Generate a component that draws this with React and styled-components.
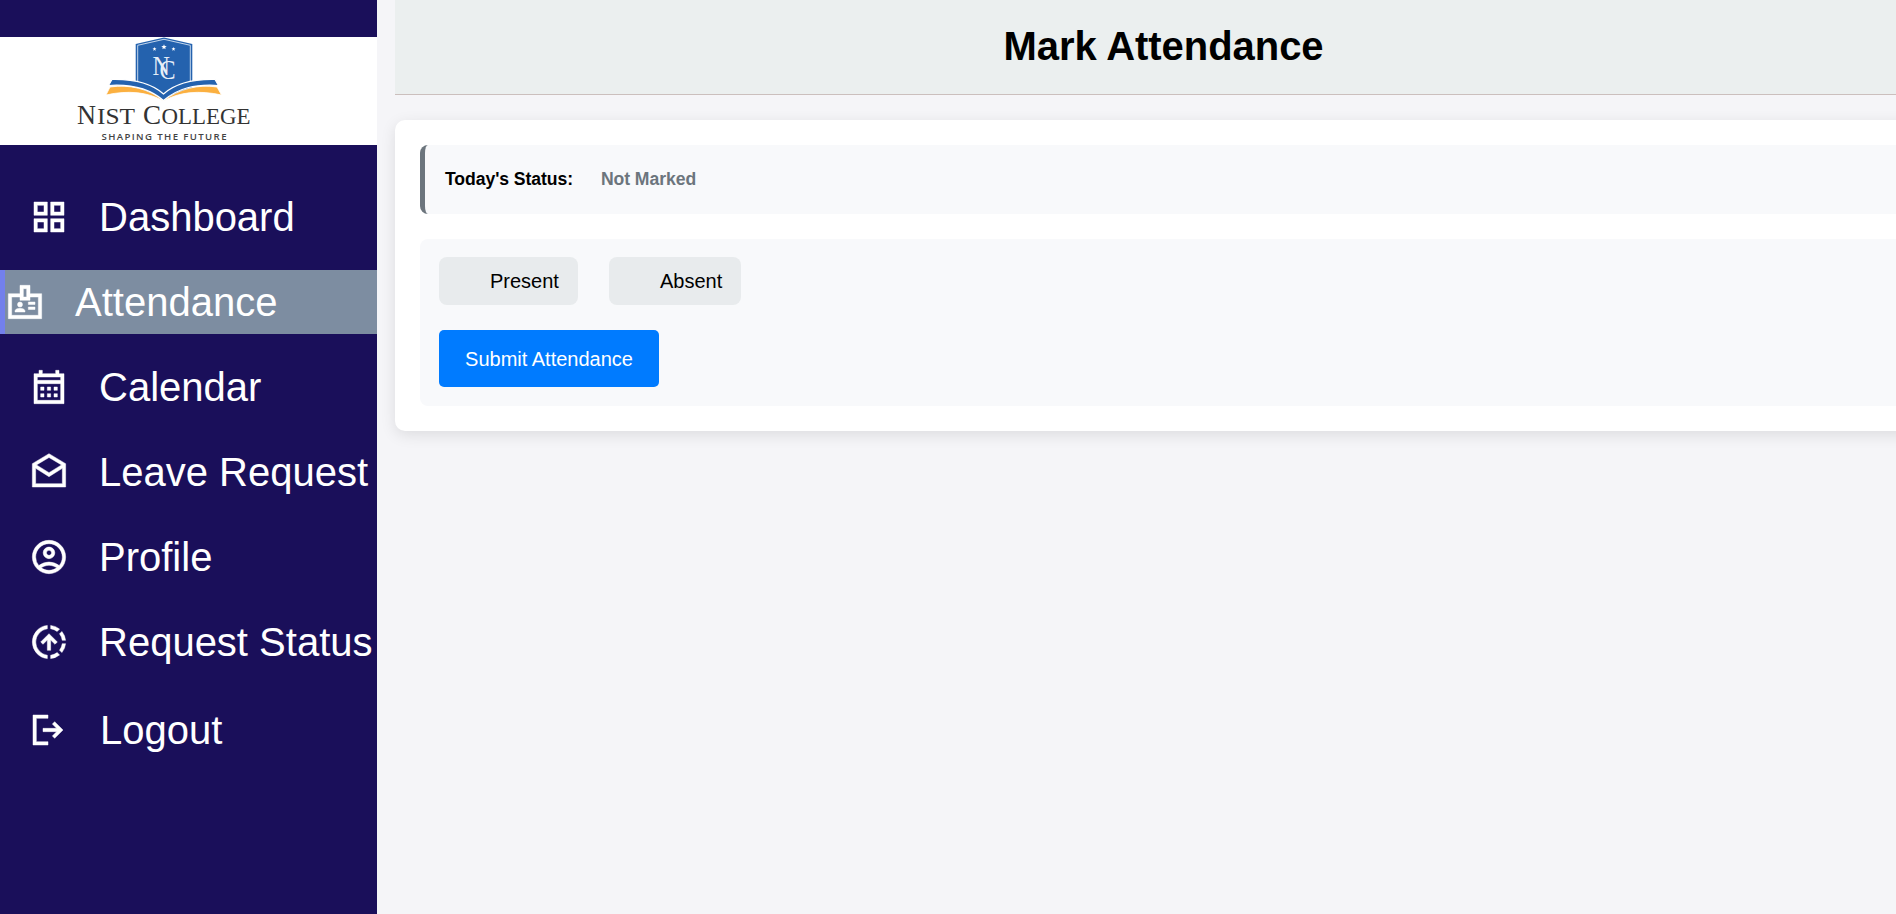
import React from 'react';
import styled, { createGlobalStyle } from 'styled-components';

const GlobalStyle = createGlobalStyle`
  * { box-sizing: border-box; }
  html, body { margin: 0; height: 100%; overflow: hidden; }
  body {
    background: #f5f5f8;
    color: #000;
    font-family: 'Liberation Sans', Arial, Helvetica, sans-serif;
  }
`;

const Page = styled.div`
  display: flex;
  width: 1932px;
  height: 100vh;
  min-height: 914px;
`;

const Sidebar = styled.aside`
  flex: 0 0 377px;
  padding-top: 37px;
  background: #1a0f5a;
`;

const LogoBar = styled.div`
  height: 108px;
  background: #fff;

  svg { display: block; margin-left: 60px; }
`;

const Nav = styled.nav`
  display: flex;
  flex-direction: column;
  gap: 21px;
  padding-top: 40px;
`;

const NavLink = styled.a`
  display: flex;
  align-items: center;
  gap: 30px;
  height: 64px;
  padding-left: ${(p) => (p.$active ? 0 : 29)}px;
  border-left: ${(p) => (p.$active ? '5px solid #7380ec' : '0')};
  background: ${(p) => (p.$active ? '#7d8da1' : 'transparent')};
  color: #fff;
  font-size: 40px;
  line-height: 46px;
  white-space: nowrap;
  text-decoration: none;
`;

const LogoutLink = styled(NavLink)`
  margin-top: 3px;
  padding-left: 27.5px;
  gap: 32.5px;
`;

const Main = styled.main`
  flex: 1;
  display: flex;
  flex-direction: column;
  gap: 25px;
  padding-left: 18px;
`;

const Header = styled.header`
  height: 95px;
  padding-top: 23px;
  border-bottom: 1px solid #cbbfbd;
  background: #ebefef;
  text-align: center;
`;

const Title = styled.h1`
  margin: 0;
  font-size: 40px;
  line-height: 46px;
  letter-spacing: -0.05px;
`;

const Card = styled.section`
  display: flex;
  flex-direction: column;
  gap: 25px;
  padding: 25px;
  border-radius: 10px;
  background: #fff;
  box-shadow: 0 4px 15px rgba(0, 0, 0, 0.1);
`;

const StatusBox = styled.div`
  display: flex;
  align-items: center;
  gap: 28px;
  height: 69px;
  padding: 0 20px;
  border-left: 5px solid #6c757d;
  border-radius: 8px;
  background: #f8f9fb;
  font-size: 17.6px;
  font-weight: 700;
  letter-spacing: -0.07px;
`;

const StatusValue = styled.span`
  color: #6c757d;
`;

const Form = styled.form`
  display: flex;
  flex-direction: column;
  align-items: flex-start;
  gap: 25px;
  height: 167px;
  padding: 18px 19px;
  border-radius: 8px;
  background: #f8f9fb;
`;

const Options = styled.div`
  display: flex;
  gap: 31px;
`;

const Option = styled.label`
  width: ${(p) => p.$width}px;
  height: 48px;
  padding-left: 51px;
  border-radius: 8px;
  background: #e8ebed;
  font-size: 20px;
  line-height: 48px;
`;

const SubmitButton = styled.button`
  width: 220px;
  height: 57px;
  padding: 1px 0 0;
  border: 0;
  border-radius: 5px;
  background: #007bff;
  color: #fff;
  font-family: inherit;
  font-size: 20px;
`;

const iconPaths = {
  dashboard: 'M3 3v8h8V3H3zm6 6H5V5h4v4zm-6 4v8h8v-8H3zm6 6H5v-4h4v4zm4-16v8h8V3h-8zm6 6h-4V5h4v4zm-6 4v8h8v-8h-8zm6 6h-4v-4h4v4z',
  badge: 'M2 7h7V2h6v5h7v15H2zM4 9v11h16V9h-5v2H9V9zM11 4v5h2V4zM14 12h4v1.5h-4zM14 15h4v1.5h-4zM9 12a1.5 1.5 0 1 0 0 3a1.5 1.5 0 1 0 0-3zM11.08 16.18C10.44 15.9 9.74 15.75 9 15.75s-1.44.15-2.08.43c-.55.24-.92.78-.92 1.39V18h6v-.43c0-.6-.36-1.15-.92-1.39z',
  calendar: 'M3 4h3V2h2v2h8V2h2v2h3v18H3zM5 6v2h14V6zM5 10v10h14V10zM7 12h2v2H7zM11 12h2v2h-2zM15 12h2v2h-2zM7 16h2v2H7zM11 16h2v2h-2zM15 16h2v2h-2z',
  drafts: 'M12 1l10 6v14H2V7zM12 3.3L4.5 7.75 12 12.4l7.5-4.65zM4 9.8V19h16V9.8l-8 5z',
  account: 'M12 2C6.48 2 2 6.48 2 12s4.48 10 10 10 10-4.48 10-10S17.52 2 12 2zM7.35 18.5C8.66 17.56 10.26 17 12 17s3.34.56 4.65 1.5c-1.31.94-2.91 1.5-4.65 1.5s-3.34-.56-4.65-1.5zm10.79-1.38a9.947 9.947 0 0 0-12.28 0A7.957 7.957 0 0 1 4 12c0-4.42 3.58-8 8-8s8 3.58 8 8c0 1.95-.7 3.73-1.86 5.12zM12 6c-1.93 0-3.5 1.57-3.5 3.5S10.07 13 12 13s3.5-1.57 3.5-3.5S13.93 6 12 6zm0 5c-.83 0-1.5-.67-1.5-1.5S11.17 8 12 8s1.5.67 1.5 1.5S12.83 11 12 11z',
  progress: 'M11 17V10.85L8.4 13.4 7 12l5-5 5 5-1.4 1.4-2.6-2.55V17zM11 2.05v2.02a8 8 0 0 0 0 15.86v2.02a10 10 0 0 1 0-19.9zM13 2.05a10 10 0 0 1 5.35 2.2L16.9 5.7a8 8 0 0 0-3.9-1.63zM19.75 5.65A10 10 0 0 1 21.95 11h-2.02a8 8 0 0 0-1.63-3.9zM21.95 13a10 10 0 0 1-2.2 5.35L18.3 16.9a8 8 0 0 0 1.63-3.9zM18.35 19.75A10 10 0 0 1 13 21.95v-2.02a8 8 0 0 0 3.9-1.63z',
  logout: 'M3 21V3h9v2H5v14h7v2zM16 17l-1.4-1.45L17.15 13H9v-2h8.15L14.6 8.45 16 7l5 5z',
};

const Icon = ({ name }) => (
  <svg
    width="40"
    height="40"
    viewBox="0 0 24 24"
    fill="currentColor"
    fillRule="evenodd"
    stroke="currentColor"
    strokeWidth="0.28"
    aria-hidden="true"
  >
    <path d={iconPaths[name]} />
  </svg>
);

const links = [
  { icon: 'dashboard', label: 'Dashboard' },
  { icon: 'badge', label: 'Attendance', active: true },
  { icon: 'calendar', label: 'Calendar' },
  { icon: 'drafts', label: 'Leave Request' },
  { icon: 'account', label: 'Profile' },
  { icon: 'progress', label: 'Request Status' },
];

const Star = ({ x, y, r }) => (
  <path
    fill="#fff"
    transform={`translate(${x} ${y}) scale(${r})`}
    d="M0-1L.27-.35 1-.3.43.17.6.85 0 .48-.6.85-.43.17-1-.3-.27-.35z"
  />
);

const CollegeLogo = () => (
  <svg width="210" height="108" viewBox="0 0 210 108">
    <path fill="#2462ae" d="M104 .5L132.300 7V52L104 62 75.700 52V7z" />
    <path fill="none" stroke="#d5e3f3" strokeWidth=".9" d="M104 2.300L130.300 8.300V46M77.700 46V8.300L104 2.300" />
    <path fill="#fbb040" stroke="#fff" strokeWidth=".8" d="M50 50C70 47 89 52 103.500 63.500 119 52 138 47 157 50L161.500 58C139 53 119 55 103.500 64 88 55 68 53 46 58z" />
    <path fill="#2462ae" stroke="#fff" strokeWidth="1.200" d="M52 42.500C74 42 91 46 103.500 57 116 46 134 42 155 42.500L158.500 48.500C135 47 118 51 103.500 63.500 89 51 71 47 48.500 48.500z" />
    <Star x={94.500} y={12} r={2} />
    <Star x={104} y={10} r={2.700} />
    <Star x={113.500} y={12} r={2} />
    <text
      transform="translate(92.500 38) scale(.86 1)"
      fill="#e6eef8"
      fontFamily="'Liberation Serif', serif"
      fontSize="28"
    >
      N<tspan dx="-12" dy="4">C</tspan>
    </text>
    <g fill="#333" fontFamily="'Liberation Serif', serif">
      <text x="17" y="87" fontSize="27.500" textLength="19" lengthAdjust="spacingAndGlyphs">N</text>
      <text x="37" y="87" fontSize="23.500" textLength="38" lengthAdjust="spacingAndGlyphs">IST</text>
      <text x="83" y="87" fontSize="27.500" textLength="18" lengthAdjust="spacingAndGlyphs">C</text>
      <text x="101.500" y="87" fontSize="23.500" textLength="89" lengthAdjust="spacingAndGlyphs">OLLEGE</text>
    </g>
    <text x="41.500" y="103" fill="#444" fontFamily="'Open Sans', sans-serif" fontSize="9.600" fontWeight="600" textLength="125">
      SHAPING THE FUTURE
    </text>
  </svg>
);

export default function App() {
  return (
    <>
      <GlobalStyle />
      <Page>
        <Sidebar>
          <LogoBar><CollegeLogo /></LogoBar>
          <Nav>
            {links.map(({ icon, label, active }) => (
              <NavLink key={label} $active={active}>
                <Icon name={icon} />
                <span>{label}</span>
              </NavLink>
            ))}
            <LogoutLink>
              <Icon name="logout" />
              <span>Logout</span>
            </LogoutLink>
          </Nav>
        </Sidebar>
        <Main>
          <Header><Title>Mark Attendance</Title></Header>
          <Card>
            <StatusBox>
              <span>Today's Status:</span>
              <StatusValue>Not Marked</StatusValue>
            </StatusBox>
            <Form>
              <Options>
                <Option $width={139}>Present</Option>
                <Option $width={132}>Absent</Option>
              </Options>
              <SubmitButton type="button">Submit Attendance</SubmitButton>
            </Form>
          </Card>
        </Main>
      </Page>
    </>
  );
}
